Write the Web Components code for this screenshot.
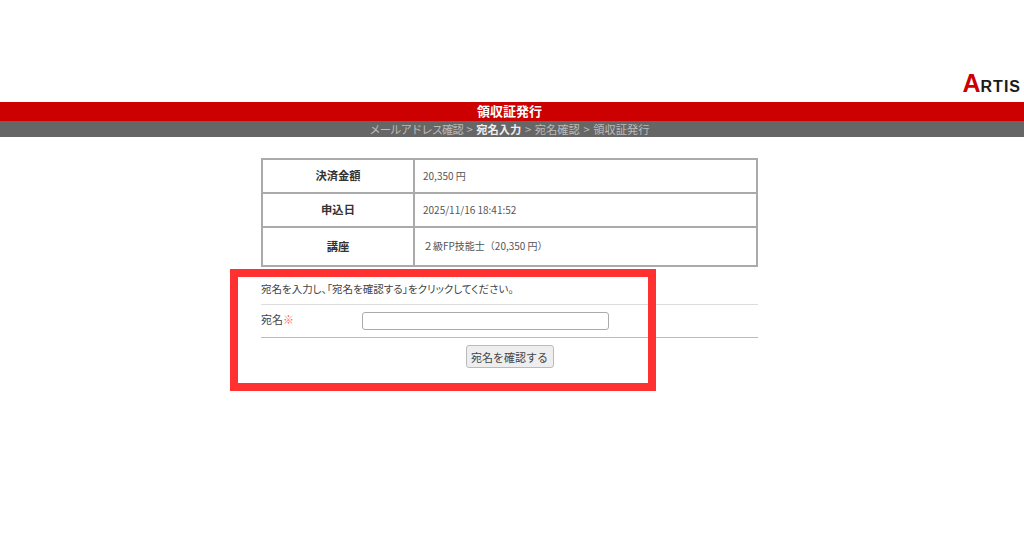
<!DOCTYPE html>
<html lang="ja">
<head>
<meta charset="utf-8">
<title>領収証発行</title>
<style>
  html, body { margin: 0; padding: 0; background: #fff; }
  body { font-family: "Liberation Sans", "Noto Sans CJK JP", sans-serif; color: #333; }
  .sep { margin: 0 3.5px; }
  .kana { letter-spacing: -.9px; }
  .now { color: #eee; }
</style>
</head>
<body>
<receipt-page>
  <site-header slot="header" title="領収証発行">
    <span slot="steps"><span class="kana">メールアドレス確認</span><span class="sep">&gt;</span><b class="now">宛名入力</b><span class="sep">&gt;</span>宛名確認<span class="sep">&gt;</span>領収証発行</span>
  </site-header>
  <info-table slot="main">
    <info-row label="決済金額">20,350 円</info-row>
    <info-row label="申込日">2025/11/16 18:41:52</info-row>
    <info-row label="講座">２級FP技能士（20,350 円）</info-row>
  </info-table>
  <name-form slot="main"></name-form>
</receipt-page>

<script>
class ReceiptPage extends HTMLElement {
  constructor() {
    super();
    this.attachShadow({ mode: 'open' });
    this.shadowRoot.innerHTML = `
    <style>
      :host { display: block; position: relative; width: 1024px; height: 538px; overflow: hidden; }
      main { width: 497px; margin: 21px 0 0 261px; }
      /* the red marker drawn on top of the screenshot */
      .marker {
        position: absolute; left: 230px; top: 269px;
        width: 426px; height: 122px; box-sizing: border-box;
        border: 8px solid #ff3131;
      }
    </style>
    <slot name="header"></slot>
    <main><slot name="main"></slot></main>
    <div class="marker"></div>
    `
  }
}

class SiteHeader extends HTMLElement {
  constructor() {
    super();
    this.attachShadow({ mode: 'open' });
    this.shadowRoot.innerHTML = `
    <style>
      :host { display: block; }
      .top { height: 102px; display: flex; justify-content: flex-end; align-items: flex-end; box-sizing: border-box; padding: 0 3px 7px 0; }
      .logo { font: 700 16px/17px "Liberation Sans", sans-serif; letter-spacing: 1px; color: #1a1a1a; white-space: nowrap; }
      .logo i { font-style: normal; font-size: 25px; color: #cc0000; letter-spacing: 0; }
      .title { height: 19px; background: #cc0000; color: #fff; text-align: center; padding-right: 5px; font: 700 13px/18px "Noto Sans CJK JP", sans-serif; }
      .steps { height: 16px; background: #666; color: #bbb; text-align: center; padding-right: 5px; font: 400 11.3px/16px "Noto Sans CJK JP", sans-serif; }
      ::slotted(span) { white-space: nowrap; }
    </style>
    <div class="top"><div class="logo"><i>A</i>RTIS</div></div>
    <div class="title"></div>
    <div class="steps"><slot name="steps"></slot></div>
    `
    this.shadowRoot.querySelector('.title').textContent = this.getAttribute('title')
  }
}

class InfoTable extends HTMLElement {
  constructor() {
    super();
    this.attachShadow({ mode: 'open' });
    this.shadowRoot.innerHTML = `
    <style>
      :host { display: block; border: 2px solid #aaa; box-sizing: border-box; height: 109px; margin-bottom: 1px; }
      .rows { display: grid; grid-template-rows: 34px 34px 1fr; height: 100%; }
    </style>
    <div class="rows"><slot></slot></div>
    `
  }
}

class InfoRow extends HTMLElement {
  constructor() {
    super();
    this.attachShadow({ mode: 'open' });
    this.shadowRoot.innerHTML = `
    <style>
      :host { display: grid; grid-template-columns: 152px 1fr; border-bottom: 2px solid #aaa; }
      :host(:last-child) { border-bottom: 0; }
      .label { border-right: 2px solid #aaa; display: flex; align-items: center; justify-content: center; padding-bottom: 2px;
        font: 700 11.3px "Noto Sans CJK JP", sans-serif; color: #333; }
      .value { display: flex; align-items: center; padding: 0 0 2px 8px;
        font: 400 10px "Noto Sans CJK JP", sans-serif; color: #555; }
    </style>
    <div class="label"></div>
    <div class="value"><slot></slot></div>
    `
    this.shadowRoot.querySelector('.label').textContent = this.getAttribute('label')
  }
}

class NameForm extends HTMLElement {
  constructor() {
    super();
    this.attachShadow({ mode: 'open' });
    this.shadowRoot.innerHTML = `
    <style>
      :host { display: block; font: 400 10.5px "Noto Sans CJK JP", sans-serif; color: #444; }
      .lead { height: 37px; line-height: 41px; border-bottom: 1px solid #ddd; box-sizing: border-box; white-space: nowrap; font-feature-settings: "palt"; }
      .field { height: 33px; display: grid; grid-template-columns: 101px 247px; align-items: center; border-bottom: 1px solid #bbb; box-sizing: border-box; }
      label { position: relative; top: -2px; font-size: 11px; }
      .field em { font-style: normal; color: #f66; }
      input { width: 247px; height: 18px; box-sizing: border-box; margin: 0; border: 1px solid #aaa; border-radius: 3px; background: #fff; }
      .actions { display: flex; justify-content: center; padding-top: 7px; }
      button { width: 88px; height: 23px; padding: 0; font: 400 11px "Noto Sans CJK JP", sans-serif; color: #444;
        background: #eee; border: 1px solid #bbb; border-radius: 3px; }
    </style>
    <div class="lead">宛名を入力し、「宛名を確認する」をクリックしてください。</div>
    <div class="field"><label>宛名<em>※</em></label><input type="text"></div>
    <div class="actions"><button type="button">宛名を確認する</button></div>
    `
  }
}

window.customElements.define('receipt-page', ReceiptPage)
window.customElements.define('site-header', SiteHeader)
window.customElements.define('info-table', InfoTable)
window.customElements.define('info-row', InfoRow)
window.customElements.define('name-form', NameForm)
</script>
</body>
</html>
